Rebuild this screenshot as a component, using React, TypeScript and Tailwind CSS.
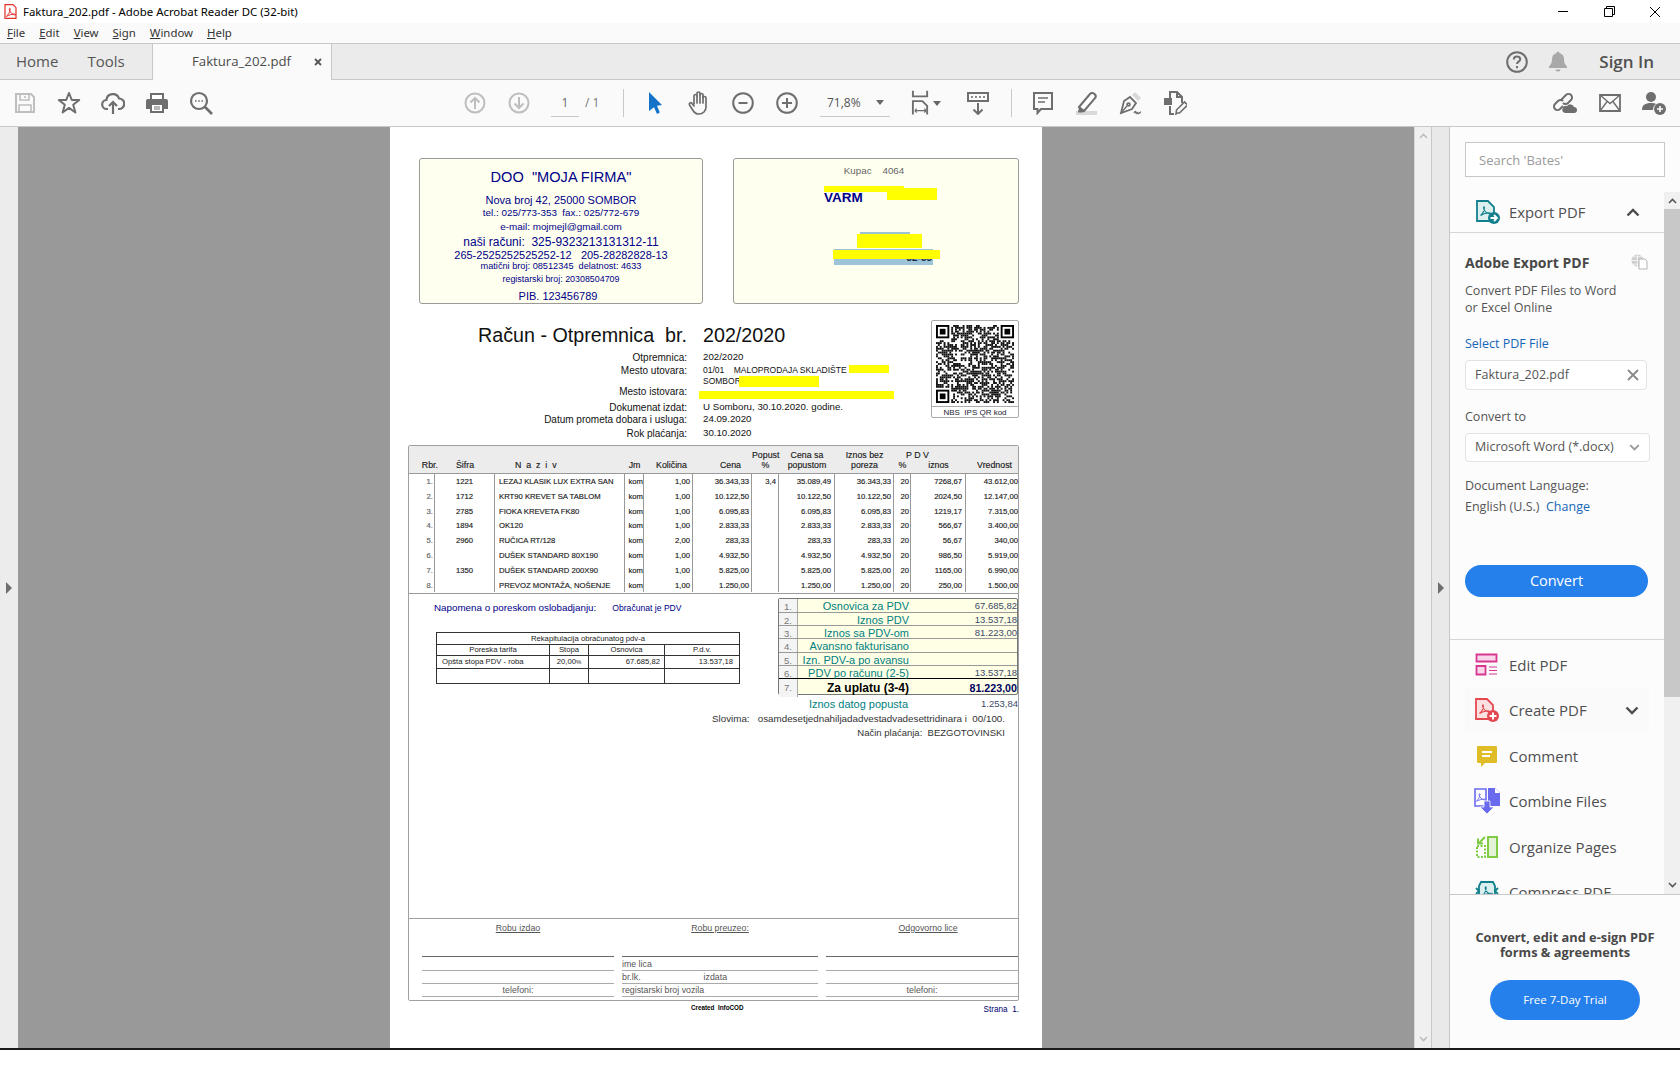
const rows = [
  ['1.', '1221', 'LEZAJ KLASIK LUX EXTRA SAN', 'kom', '1,00', '36.343,33', '3,4', '35.089,49', '36.343,33', '20', '7268,67', '43.612,00'],
  ['2.', '1712', 'KRT90 KREVET SA TABLOM', 'kom', '1,00', '10.122,50', '', '10.122,50', '10.122,50', '20', '2024,50', '12.147,00'],
  ['3.', '2785', 'FIOKA KREVETA FK80', 'kom', '1,00', '6.095,83', '', '6.095,83', '6.095,83', '20', '1219,17', '7.315,00'],
  ['4.', '1894', 'OK120', 'kom', '1,00', '2.833,33', '', '2.833,33', '2.833,33', '20', '566,67', '3.400,00'],
  ['5.', '2960', 'RUČICA RT/128', 'kom', '2,00', '283,33', '', '283,33', '283,33', '20', '56,67', '340,00'],
  ['6.', '', 'DUŠEK STANDARD 80X190', 'kom', '1,00', '4.932,50', '', '4.932,50', '4.932,50', '20', '986,50', '5.919,00'],
  ['7.', '1350', 'DUŠEK STANDARD 200X90', 'kom', '1,00', '5.825,00', '', '5.825,00', '5.825,00', '20', '1165,00', '6.990,00'],
  ['8.', '', 'PREVOZ MONTAŽA, NOŠENJE', 'kom', '1,00', '1.250,00', '', '1.250,00', '1.250,00', '20', '250,00', '1.500,00'],
]

const cellCls = [
  'text-right pr-[1px] text-[#777]',
  'text-center',
  'text-left pl-[4px]',
  'text-right',
  'text-right pr-[2px]',
  'text-right pr-[2px]',
  'text-right pr-[2px]',
  'text-right pr-[3px]',
  'text-right pr-[2px]',
  'text-right pr-[1px]',
  'text-right pr-[3px]',
  'text-right',
]

const totals = [
  ['1.', 'Osnovica za PDV', '67.685,82'],
  ['2.', 'Iznos PDV', '13.537,18'],
  ['3.', 'Iznos sa PDV-om', '81.223,00'],
  ['4.', 'Avansno fakturisano', ''],
  ['5.', 'Izn. PDV-a po avansu', ''],
  ['6.', 'PDV po računu (2-5)', '13.537,18'],
]

const infoRows = [
  ['Otpremnica:', '202/2020', 'mt-[1px]', 'text-[9.700px]'],
  ['Mesto utovara:', '01/01    MALOPRODAJA SKLADIŠTE', 'mt-[1px]', 'text-[8.500px]'],
  ['', 'SOMBOR', '-mt-[1px]', 'text-[8.500px]'],
  ['Mesto istovara:', '', '-mt-[2px]', 'text-[9.700px]'],
  ['Dokumenat izdat:', 'U Somboru, 30.10.2020. godine.', 'mt-[4px]', 'text-[9.700px]'],
  ['Datum prometa dobara i usluga:', '24.09.2020', 'mt-0', 'text-[9.700px]'],
  ['Rok plaćanja:', '30.10.2020', 'mt-[2px]', 'text-[9.700px]'],
]

// pseudo random modules for the qr picture
function qrCells() {
  const n = 41
  const cells: [number, number][] = []
  let s = 90173
  const finder = (x: number, y: number) => x < 8 && y < 8 || x >= n - 8 && y < 8 || x < 8 && y >= n - 8
  for (let y = 0; y < n; y++) {
    for (let x = 0; x < n; x++) {
      s = (s * 1103515245 + 12345) & 0x7fffffff
      if (!finder(x, y) && (s >> 16) % 100 < 52) cells.push([x, y])
    }
  }
  return cells
}

function Finder({ x, y }: { x: number; y: number }) {
  return (
    <g>
      <rect x={x + 0.5} y={y + 0.5} width={6} height={6} fill="none" stroke="#000" />
      <rect x={x + 2} y={y + 2} width={3} height={3} fill="#000" />
    </g>
  )
}

function Qr() {
  return (
    <svg viewBox="0 0 41 41" className="w-[78px] h-[80px]">
      {qrCells().map(([x, y]) => (
        <rect key={x + '-' + y} x={x} y={y} width={1} height={1} fill="#111" />
      ))}
      <Finder x={0} y={0} />
      <Finder x={34} y={0} />
      <Finder x={0} y={34} />
    </svg>
  )
}

function Swoosh({ color, x = 0, y = 0, s = 1 }: { color: string; x?: number; y?: number; s?: number }) {
  return (
    <path
      transform={`translate(${x} ${y}) scale(${s})`}
      d="M1 11c2-1.5 4-5 4.200-8 .1-1.500-1-1.500-1 0 0 3 3.800 6.300 6.500 6.500 1.200.1 1-1.200-.5-1.200-2.700 0-6.700 1.300-9.200 2.700z"
      fill="none"
      stroke={color}
      strokeWidth="1.100"
    />
  )
}

const gray = '#6e6e6e'
const off = '#bebebe'

function SaveIcon() {
  return (
    <svg width="20" height="20" viewBox="0 0 20 20" fill="none" stroke={off} strokeWidth="2">
      <path d="M1 1h15l3 3v15H1z" />
      <path d="M5 1v6h9V1M4 19v-7h12v7M10 3v2" strokeWidth="1.600" />
    </svg>
  )
}
function StarIcon() {
  return (
    <svg width="24" height="24" viewBox="0 0 24 24" fill="none" stroke={gray} strokeWidth="2" strokeLinejoin="round">
      <path d="M12 2l2.800 7h7.400l-6 4.700 2.200 7.800-6.400-4.600-6.400 4.600 2.200-7.800-6-4.700h7.400z" />
    </svg>
  )
}
function CloudIcon() {
  return (
    <svg width="24" height="24" viewBox="0 0 24 24" fill="none" stroke={gray} strokeWidth="2.200">
      <path d="M7 18H6a4.500 4.500 0 0 1-.6-9A6.500 6.500 0 0 1 18 7.500 5 5 0 0 1 18 18h-1" />
      <path d="M12 23V11M8 15l4-4 4 4" />
    </svg>
  )
}
function PrintIcon() {
  return (
    <svg width="24" height="24" viewBox="0 0 24 24">
      <path d="M5 8V2h14v6h2a2 2 0 0 1 2 2v8h-4v4H5v-4H1v-8a2 2 0 0 1 2-2z" fill={gray} />
      <path d="M7 4h10v4H7zM7 14h10v6H7z" fill="#fff" />
      <path d="M9 16h6M9 18h6" stroke={gray} />
    </svg>
  )
}
function FindIcon() {
  return (
    <svg width="24" height="24" viewBox="0 0 24 24" fill="none" stroke={gray} strokeWidth="2.200">
      <circle cx="10" cy="10" r="8" />
      <path d="M16 16l7 7" strokeWidth="2.600" />
      <path d="M6 10h1.600M9.200 10h1.600M12.400 10h1.600" strokeWidth="1.600" />
    </svg>
  )
}
function RoundArrow({ down }: { down?: boolean }) {
  return (
    <svg width="22" height="22" viewBox="0 0 22 22" fill="none" stroke={off} strokeWidth="2">
      <circle cx="11" cy="11" r="9.500" />
      {down ? <path d="M11 5v11M6.500 11.500L11 16l4.500-4.500" /> : <path d="M11 17V6M6.500 10.500L11 6l4.500 4.500" />}
    </svg>
  )
}
function CursorIcon() {
  return (
    <svg width="16" height="22" viewBox="0 0 16 22">
      <path d="M2 0l13 13-5 .8 2.800 6.700-2.800 1.500-3-6.800L2 19z" fill="#1473c9" />
    </svg>
  )
}
function HandIcon() {
  return (
    <svg width="24" height="26" viewBox="0 0 24 26" fill="none" stroke={gray} strokeWidth="1.700" strokeLinecap="round" strokeLinejoin="round">
      <path d="M7 14V6a1.500 1.500 0 0 1 3 0V3.500a1.500 1.500 0 0 1 3 0V5a1.500 1.500 0 0 1 3 0v3a1.500 1.500 0 0 1 3 0v9c0 4-3 7-7 7-3 0-4.500-1-6-3.500L2.500 15c-1-2 1.500-3 2.500-1.500L7 16" />
      <path d="M10 6v7M13 4v9M16 6v7" />
    </svg>
  )
}
function ZoomIcon({ plus }: { plus?: boolean }) {
  return (
    <svg width="22" height="22" viewBox="0 0 22 22" fill="none" stroke={gray} strokeWidth="2">
      <circle cx="11" cy="11" r="9.800" />
      <path d={plus ? 'M6 11h10M11 6v10' : 'M6.500 11h9'} />
    </svg>
  )
}
function FitIcon() {
  return (
    <svg width="20" height="26" viewBox="0 0 20 26" fill="none" stroke={gray} strokeWidth="2">
      <path d="M2 0v6h15V0" />
      <path d="M2 25V11h10l5 5v9" />
      <path d="M4 21h12M4 21l2-2M4 21l2 2M16 21l-2-2M16 21l-2 2" strokeWidth="1.200" />
    </svg>
  )
}
function RulerIcon() {
  return (
    <svg width="24" height="24" viewBox="0 0 24 24" fill="none" stroke={gray} strokeWidth="2">
      <path d="M2 2h20v8H2z" />
      <path d="M6 5v2M10 5v2M14 5v2M18 5v2" strokeWidth="1.600" />
      <path d="M12 12v11M7.500 18.500L12 23l4.500-4.500" />
    </svg>
  )
}
function CommentIcon() {
  return (
    <svg width="22" height="24" viewBox="0 0 22 24" fill="none" stroke={gray} strokeWidth="2">
      <path d="M2 2h18v16H9l-3.500 4v-4H2z" />
      <path d="M6 7h10M6 11h7" strokeWidth="1.500" />
    </svg>
  )
}
function MarkerIcon() {
  return (
    <svg width="24" height="24" viewBox="0 0 24 24">
      <path d="M1 20h21v4H1z" fill="#d9d9d9" />
      <path d="M4 16L15 3c1-1.300 3-1.300 4.500 0s1.500 3 .5 4.200L9 20z" fill="#fff" stroke={gray} strokeWidth="2" />
      <path d="M4 16l5 4-1.500 1.500H3z" fill={gray} />
    </svg>
  )
}
function PenIcon() {
  return (
    <svg width="24" height="24" viewBox="0 0 24 24" fill="none" stroke={gray} strokeWidth="1.800">
      <path d="M13 4l3-3 6 6-3 3z" fill="#d9d9d9" stroke="none" />
      <path d="M2 22l3-12 6-4 6 6-4 6z" />
      <path d="M2 22l6-7" strokeWidth="1.300" />
      <circle cx="9.500" cy="13.500" r="1.400" />
      <path d="M15 22c1-2 2-2 2 0s2-2 2 0 2-1 3-1" strokeWidth="1.300" />
    </svg>
  )
}
function EditDocIcon() {
  return (
    <svg width="24" height="24" viewBox="0 0 24 24" fill="none" stroke={gray} strokeWidth="2">
      <path d="M7 7V1h7l5 5v6M14 1v5h5" />
      <path d="M1 7h8v7H1z" fill={gray} stroke="none" />
      <path d="M7 15v8h4" />
      <path d="M14 22l-1 1 .5-4 8-8 3 3-8 8z" strokeWidth="1.600" />
    </svg>
  )
}
function LinkCloudIcon() {
  return (
    <svg width="26" height="24" viewBox="0 0 26 24" fill="none" stroke={gray} strokeWidth="2">
      <path d="M10 9l5-5a3.500 3.500 0 0 1 5 5l-3 3a3.500 3.500 0 0 1-5 0" />
      <path d="M12 15l-3 3a3.500 3.500 0 0 1-5-5l3-3a3.500 3.500 0 0 1 5 0" />
      <path d="M14 22h9a3 3 0 0 0 0-6 4 4 0 0 0-7-1 3.500 3.500 0 0 0-2 7z" fill={gray} stroke="none" />
    </svg>
  )
}
function MailIcon() {
  return (
    <svg width="22" height="18" viewBox="0 0 22 18" fill="none" stroke={gray} strokeWidth="1.800">
      <path d="M1 1h20v16H1z" />
      <path d="M1 1l10 8.500L21 1M1 17l7.500-10M21 17l-7.500-10" strokeWidth="1.400" />
    </svg>
  )
}
function AddUserIcon() {
  return (
    <svg width="25" height="24" viewBox="0 0 25 24">
      <circle cx="9" cy="6" r="5" fill={gray} />
      <path d="M0 19c0-5 3-7 9-7 2 0 4 .3 5 1a7 7 0 0 0-3 6z" fill={gray} />
      <circle cx="18" cy="18" r="6" fill={gray} />
      <path d="M18 15v6M15 18h6" stroke="#fff" strokeWidth="1.600" />
    </svg>
  )
}
function HelpIcon() {
  return (
    <svg width="22" height="22" viewBox="0 0 22 22" fill="none" stroke={gray} strokeWidth="2">
      <circle cx="11" cy="11" r="9.800" />
      <path d="M7.800 8.500c0-2 1.400-3 3.200-3s3.200 1 3.200 2.700c0 2.500-3.200 2.300-3.200 4.800" />
      <path d="M11 15v2.200" />
    </svg>
  )
}
function BellIcon() {
  return (
    <svg width="18" height="21" viewBox="0 0 18 21">
      <path d="M7.500 2a1.500 1.500 0 0 1 3 0c3 1 4.500 3 4.500 6 0 4 1 5.500 3 7.500v1.500H0v-1.500c2-2 3-3.500 3-7.500 0-3 1.500-5 4.500-6z" fill="#a8a8a8" />
      <path d="M6.500 18.500h5a2.500 2 0 0 1-5 0z" fill="#a8a8a8" />
    </svg>
  )
}
function DocBadge({ color, light, plus }: { color: string; light: string; plus?: boolean }) {
  return (
    <svg width="24" height="24" viewBox="0 0 24 24" fill="none">
      <path d="M1 1h11l6 6v14H1z" fill={light} stroke={color} strokeWidth="1.800" />
      <Swoosh color={color} x={3.500} y={5} s={0.95} />
      <circle cx="18" cy="18" r="6" fill={color} />
      {plus ? (
        <path d="M18 14.500v7M14.500 18h7" stroke="#fff" strokeWidth="2" />
      ) : (
        <path d="M14.500 18h6M18 15l3 3-3 3" stroke="#fff" strokeWidth="1.800" />
      )}
    </svg>
  )
}
function EditPdfIcon() {
  return (
    <svg width="24" height="24" viewBox="0 0 24 24" fill="none" stroke="#d83790" strokeWidth="1.800">
      <path d="M1.500 1.500h20v7h-20z" fill="#f7d7e9" />
      <path d="M1.500 13h9v8.500h-9z" fill="#f7d7e9" />
      <path d="M14 14h8M14 17.500h8M14 21h8" strokeWidth="1.200" />
    </svg>
  )
}
function CommentToolIcon() {
  return (
    <svg width="22" height="24" viewBox="0 0 22 24">
      <path d="M2 2h18a1 1 0 0 1 1 1v15a1 1 0 0 1-1 1H9l-4 4v-4H2a1 1 0 0 1-1-1V3a1 1 0 0 1 1-1z" fill="#e0bc28" />
      <path d="M6 8h10M6 12h8" stroke="#fff" strokeWidth="1.800" />
    </svg>
  )
}
function CombineIcon() {
  return (
    <svg width="26" height="26" viewBox="0 0 26 26">
      <path d="M1 1h11v17H1z" fill="#fff" stroke="#6a6aee" strokeWidth="1.600" />
      <Swoosh color="#6a6aee" x={1.500} y={4} s={0.85} />
      <path d="M14 0h7l5 5v13H14z" fill="#6a6aee" />
      <path d="M21 0l5 5h-5z" fill="#fff" />
      <path d="M10 13h6v6h4l-7 7-7-7h4z" fill="#6a6aee" stroke="#fff" strokeWidth=".8" />
    </svg>
  )
}
function OrganizeIcon() {
  return (
    <svg width="24" height="24" viewBox="0 0 24 24" fill="none" stroke="#7fcc44" strokeWidth="2">
      <path d="M13 2h9v20h-9z" fill="#e4f3d6" />
      <path d="M2 11h8v11H2z" strokeDasharray="2 1.500" />
      <path d="M10 2L4 8M3 3.500V8.500h5" strokeWidth="2" />
    </svg>
  )
}
function CompressIcon() {
  return (
    <svg width="24" height="24" viewBox="0 0 24 24" fill="none" stroke="#12808c" strokeWidth="1.800">
      <path d="M6 2h12l2 4v12l-2 4H6l-2-4V6z" fill="#dcefef" />
      <path d="M1 8l3 3-3 3M23 8l-3 3 3 3" />
      <Swoosh color="#12808c" x={6} y={5} s={1} />
    </svg>
  )
}
function GlobeDocIcon() {
  return (
    <svg width="17" height="16" viewBox="0 0 17 16">
      <circle cx="6.500" cy="6.500" r="6" fill="#cfcfcf" />
      <path d="M.500 6.500h12M6.500 .500v12M2 2.800h9M2 10.200h9" stroke="#fcfcfc" strokeWidth=".7" />
      <path d="M8 5h6l2 2v8H8z" fill="#fff" stroke="#b4b4b4" />
    </svg>
  )
}
function Chevron({ down, className }: { down?: boolean; className?: string }) {
  return (
    <svg width="14" height="9" viewBox="0 0 14 9" fill="none" stroke="currentColor" strokeWidth="2.400" className={className}>
      <path d={down ? 'M1.500 1.500L7 7l5.500-5.500' : 'M1.500 7.500L7 2l5.500 5.500'} />
    </svg>
  )
}

function ToolBtn({ children }: { children: React.ReactNode }) {
  return <div className="w-[44px] h-[46px] flex items-center justify-center shrink-0">{children}</div>
}

function Sep() {
  return <div className="w-px h-[28px] bg-[#c8c8c8] shrink-0" />
}

function ToolRow({ icon, label, arrow, band }: { icon: React.ReactNode; label: string; arrow?: boolean; band?: boolean }) {
  return (
    <div className={band ? 'h-[45.500px] flex items-center mx-[15px] pl-[7px] bg-[#fafafa]' : 'h-[45.500px] flex items-center mx-[15px] pl-[7px]'}>
      <div className="w-[30px] flex justify-center">{icon}</div>
      <span className="ml-[7px] text-[15px] text-[#4f4f4f]">{label}</span>
      {arrow && <Chevron down className="ml-auto mr-[10px] text-[#4b4b4b]" />}
    </div>
  )
}

export default function App() {
  return (
    <div className="w-[1680px] h-[1078px] overflow-hidden flex flex-col bg-white font-['Open_Sans',sans-serif] text-[#4b4b4b]">
      {/* title bar */}
      <div className="h-[23px] shrink-0 bg-white flex items-center pl-[4px] text-[11.400px] text-black font-['Noto_Sans',sans-serif]">
        <svg width="13" height="15" viewBox="0 0 13 15" fill="none" className="mr-[6px]">
          <path d="M1 .700h8l3 3v10.600H1z" fill="#fff" stroke="#e0312a" strokeWidth="1.200" />
          <Swoosh color="#e0312a" x={1.500} y={2.500} s={0.9} />
        </svg>
        <span>Faktura_202.pdf - Adobe Acrobat Reader DC (32-bit)</span>
        <div className="ml-auto flex items-center pr-[2px]">
          <div className="w-[46px] flex justify-center"><div className="w-[10px] h-px bg-black" /></div>
          <div className="w-[46px] flex justify-center">
            <svg width="11" height="11" viewBox="0 0 11 11" fill="none" stroke="#000">
              <path d="M.500 2.500h8v8h-8zM2.500 2.500v-2h8v8h-2" />
            </svg>
          </div>
          <div className="w-[46px] flex justify-center">
            <svg width="12" height="12" viewBox="0 0 12 12" stroke="#000"><path d="M1 1l10 10M11 1L1 11" /></svg>
          </div>
        </div>
      </div>

      {/* menu */}
      <div className="h-[20px] shrink-0 bg-[#fafafa] flex items-center pl-[7px] gap-[14px] text-[11.400px] text-[#333] font-['Noto_Sans',sans-serif]">
        <span><u>F</u>ile</span>
        <span><u>E</u>dit</span>
        <span><u>V</u>iew</span>
        <span><u>S</u>ign</span>
        <span><u>W</u>indow</span>
        <span><u>H</u>elp</span>
      </div>

      {/* tabs */}
      <div className="h-[37px] shrink-0 bg-[#ebebeb] border-t border-b border-[#c8c8c8] flex items-stretch text-[15px] text-[#565656]">
        <div className="w-[152px] flex items-center pl-[16px] gap-[29px]">
          <span>Home</span>
          <span>Tools</span>
        </div>
        <div className="w-[180px] -mb-px bg-[#fafafa] border-l border-r border-[#c8c8c8] flex items-center pl-[39px] text-[13.200px] text-[#4b4b4b]">
          <span>Faktura_202.pdf</span>
          <svg width="8" height="8" viewBox="0 0 8 8" stroke="#555" strokeWidth="1.800" className="ml-[23px]"><path d="M1 1l6 6M7 1L1 7" /></svg>
        </div>
        <div className="ml-auto flex items-center pr-[26px]">
          <HelpIcon />
          <div className="ml-[21px]"><BellIcon /></div>
          <span className="ml-[32px] text-[17px] font-semibold text-[#505050]">Sign In</span>
        </div>
      </div>

      {/* toolbar */}
      <div className="h-[47px] shrink-0 bg-[#fafafa] border-b border-[#c8c8c8] flex items-center pl-[3px] pr-[4px]">
        <ToolBtn><SaveIcon /></ToolBtn>
        <ToolBtn><StarIcon /></ToolBtn>
        <ToolBtn><CloudIcon /></ToolBtn>
        <ToolBtn><PrintIcon /></ToolBtn>
        <ToolBtn><FindIcon /></ToolBtn>
        <div className="w-[230px] shrink-0" />
        <ToolBtn><RoundArrow /></ToolBtn>
        <ToolBtn><RoundArrow down /></ToolBtn>
        <div className="ml-[10px] w-[28px] h-[28px] border-b border-[#c8c8c8] flex items-center justify-center text-[12px] text-[#666] shrink-0">1</div>
        <span className="ml-[6px] w-[38px] text-[12px] text-[#777] shrink-0">/ 1</span>
        <Sep />
        <div className="w-[9px] shrink-0" />
        <ToolBtn><CursorIcon /></ToolBtn>
        <ToolBtn><HandIcon /></ToolBtn>
        <ToolBtn><ZoomIcon /></ToolBtn>
        <ToolBtn><ZoomIcon plus /></ToolBtn>
        <div className="ml-[11px] w-[70px] h-[28px] border-b border-[#c8c8c8] flex items-center pl-[7px] text-[12px] text-[#555] shrink-0">
          71,8%
          <div className="ml-[15px] w-0 h-0 border-l-[4px] border-r-[4px] border-t-[5px] border-l-transparent border-r-transparent border-t-[#666]" />
        </div>
        <div className="ml-[21px] w-[30px] flex items-center shrink-0">
          <FitIcon />
          <div className="ml-[3px] w-0 h-0 border-l-[4px] border-r-[4px] border-t-[5px] border-l-transparent border-r-transparent border-t-[#666]" />
        </div>
        <div className="ml-[15px]"><ToolBtn><RulerIcon /></ToolBtn></div>
        <div className="ml-[11px]"><Sep /></div>
        <div className="w-[9px] shrink-0" />
        <ToolBtn><CommentIcon /></ToolBtn>
        <ToolBtn><MarkerIcon /></ToolBtn>
        <ToolBtn><PenIcon /></ToolBtn>
        <ToolBtn><EditDocIcon /></ToolBtn>
        <div className="ml-auto flex">
          <ToolBtn><LinkCloudIcon /></ToolBtn>
          <div className="w-[2px]" />
          <ToolBtn><MailIcon /></ToolBtn>
          <ToolBtn><AddUserIcon /></ToolBtn>
        </div>
      </div>

      {/* main */}
      <div className="flex-1 min-h-0 flex">
        <div className="w-[18px] shrink-0 bg-[#ececec] flex items-center justify-center pt-[1px]">
          <div className="w-0 h-0 border-t-[6px] border-b-[6px] border-l-[6px] border-t-transparent border-b-transparent border-l-[#6e6e6e]" />
        </div>

        <div className="flex-1 min-w-0 bg-[#999999] flex justify-center overflow-hidden">
          {/* pdf page */}
          <div className="w-[652px] h-full bg-white pl-[18px] pr-[23px] pt-[31px] overflow-hidden font-['Liberation_Sans',sans-serif] text-[#111]">
            <div className="flex gap-[30px] ml-[11px]">
              <div className="w-[284px] h-[146px] bg-[#ffffef] border border-[#9a9a9a] rounded-[3px] flex flex-col items-center text-[#000088] whitespace-pre">
                <div className="h-[27px] mt-[5px] flex items-center text-[14.600px]">DOO  "MOJA FIRMA"</div>
                <div className="h-[14px] mt-[2px] flex items-center text-[11px]">Nova broj 42, 25000 SOMBOR</div>
                <div className="h-[13px] flex items-center text-[9.900px]">tel.: 025/773-353  fax.: 025/772-679</div>
                <div className="h-[15px] flex items-center text-[9.900px]">e-mail: mojmejl@gmail.com</div>
                <div className="h-[13px] flex items-center text-[12px]">naši računi:  325-9323213131312-11</div>
                <div className="h-[14px] flex items-center text-[11px]">265-2525252525252-12   205-28282828-13</div>
                <div className="h-[10px] flex items-center text-[9.200px]">matični broj: 08512345  delatnost: 4633</div>
                <div className="h-[14px] mt-[1px] flex items-center text-[8.900px]">registarski broj: 20308504709</div>
                <div className="h-[14px] mt-[2px] flex items-center text-[11px] pr-[6px]">PIB. 123456789</div>
              </div>
              <div className="relative w-[286px] h-[146px] bg-[#ffffef] border border-[#9a9a9a] rounded-[3px] overflow-hidden">
                <div className="mt-[5px] text-center text-[9.800px] text-[#666] whitespace-pre pr-[4px]">Kupac    4064</div>
                <div className="mt-[9px] ml-[90px] text-[13.500px] font-bold text-[#000088]">VARM</div>
                <div className="absolute left-[90px] top-[27px] w-[80px] h-[6px] bg-[#ffff00]" />
                <div className="absolute left-[153px] top-[29px] w-[50px] h-[12px] bg-[#ffff00]" />
                <div className="absolute left-[126px] top-[73px] w-[50px] h-[5px] bg-[#9dc3d8]" />
                <div className="absolute left-[123px] top-[75px] w-[65px] h-[14px] bg-[#ffff00]" />
                <div className="absolute left-[100px] top-[90px] w-[99px] h-[16px] bg-[#9dc3d8] flex items-end justify-end pr-[1px] text-[10px] leading-[14px] font-bold text-[#1c2a44]">32-35</div>
                <div className="absolute left-[99px] top-[91px] w-[107px] h-[9px] bg-[#ffff00]" />
              </div>
            </div>

            <div className="mt-[16px] h-[125px] flex">
              <div className="relative flex-1">
                <div className="h-[30px] pt-[2px] flex items-center text-[19.700px] whitespace-pre">
                  <span className="w-[279px] text-right">Račun - Otpremnica  br.</span>
                  <span className="ml-[16px]">202/2020</span>
                </div>
                {infoRows.map((r, i) => (
                  <div key={i} className={'h-[12px] flex items-center whitespace-pre ' + r[2]}>
                    <span className="w-[279px] text-right text-[10px]">{r[0]}</span>
                    <span className={'ml-[16px] ' + r[3]}>{r[1]}</span>
                  </div>
                ))}
                <div className="absolute left-[441px] top-[45px] w-[40px] h-[8px] bg-[#ffff00]" />
                <div className="absolute left-[331px] top-[56px] w-[80px] h-[11px] bg-[#ffff00]" />
                <div className="absolute left-[291px] top-[71px] w-[195px] h-[8px] bg-[#ffff00]" />
              </div>
              <div className="w-[88px] h-[98px] shrink-0 border border-[#aaa] rounded-[2px] flex flex-col items-center">
                <div className="mt-[3px]"><Qr /></div>
                <div className="mt-[2px] w-full border-t border-[#aaa] text-center text-[8px] text-[#223] whitespace-pre">NBS  IPS QR kod</div>
              </div>
            </div>

            {/* invoice frame */}
            <div className="w-[611px] h-[556px] border border-[#a0a0a0] rounded-[2px] flex flex-col">
              <div className="h-[28px] shrink-0 bg-[#ececec] border-b border-[#999] grid grid-cols-[26px_60px_130px_19px_49px_59px_27px_56px_59px_17px_55px_52px] text-[8.800px] leading-[10px] text-[#111] [-webkit-text-stroke:0.15px_#333]">
                <div className="self-end pb-[3px] -mr-[3px] text-right whitespace-nowrap">Rbr.</div>
                <div className="self-end pb-[3px] text-center">Šifra</div>
                <div className="self-end pb-[3px] pl-[20px] whitespace-pre">N  a  z  i  v</div>
                <div className="self-end pb-[3px] text-center">Jm</div>
                <div className="self-end pb-[3px] pl-[6px] text-center whitespace-nowrap">Količina</div>
                <div className="self-end pb-[3px] text-right pr-[11px]">Cena</div>
                <div className="self-end pb-[3px] text-center">Popust<br />%</div>
                <div className="self-end pb-[3px] text-center whitespace-nowrap">Cena sa<br />popustom</div>
                <div className="self-end pb-[3px] text-center whitespace-nowrap">Iznos bez<br />poreza</div>
                <div className="self-end pb-[3px] text-center whitespace-pre"><div className="pl-[12px] text-left">P D V</div>%</div>
                <div className="self-end pb-[3px] text-center">iznos</div>
                <div className="self-end pb-[3px] text-right pr-[6px]">Vrednost</div>
              </div>
              {rows.map((r) => (
                <div key={r[0]} className="h-[14.800px] shrink-0 grid grid-cols-[26px_60px_130px_19px_49px_59px_27px_56px_59px_17px_55px_52px] text-[7.700px] leading-[15px] text-[#111] [-webkit-text-stroke:0.15px_#333] [&>div]:border-r [&>div]:border-[#999] [&>div:last-child]:border-r-0 whitespace-nowrap overflow-hidden">
                  {r.map((c, i) => (
                    <div key={i} className={cellCls[i]}>{c}</div>
                  ))}
                </div>
              ))}

              <div className="flex-1 min-h-0 flex mt-[1px] border-t border-[#999]">
                <div className="w-[369px] shrink-0 pt-[7px]">
                  <div className="h-[14px] flex items-center text-[9.800px] text-[#000088] whitespace-nowrap">
                    <span className="ml-[25px]">Napomena o poreskom oslobadjanju:</span>
                    <span className="ml-[16px] text-[8.600px]">Obračunat je PDV</span>
                  </div>
                  <div className="mt-[17px] ml-[27px] w-[304px] border border-[#333] text-[7.700px] text-[#222]">
                    <div className="h-[12px] border-b border-[#333] flex items-center justify-center">Rekapitulacija obračunatog pdv-a</div>
                    <div className="h-[11px] border-b border-[#333] grid grid-cols-[113px_39px_76px_1fr] [&>div]:border-r [&>div]:border-[#333] [&>div:last-child]:border-r-0 text-center leading-[10px]">
                      <div>Poreska tarifa</div>
                      <div>Stopa</div>
                      <div>Osnovica</div>
                      <div>P.d.v.</div>
                    </div>
                    <div className="h-[13px] border-b border-[#333] grid grid-cols-[113px_39px_76px_1fr] [&>div]:border-r [&>div]:border-[#333] [&>div:last-child]:border-r-0 leading-[12px]">
                      <div className="pl-[5px]">Opšta stopa PDV - roba</div>
                      <div className="text-center">20,00<span className="text-[6px]">%</span></div>
                      <div className="text-right pr-[4px]">67.685,82</div>
                      <div className="text-right pr-[6px]">13.537,18</div>
                    </div>
                    <div className="h-[14px] grid grid-cols-[113px_39px_76px_1fr] [&>div]:border-r [&>div]:border-[#333] [&>div:last-child]:border-r-0">
                      <div />
                      <div />
                      <div />
                      <div />
                    </div>
                  </div>
                </div>

                <div className="flex-1 min-w-0 pt-[4px]">
                  <div className="h-[97px] border border-[#777] rounded-[2px] bg-[#ffffe6] flex flex-col">
                    {totals.map((t, i) => (
                      <div key={t[0]} className={i === 5 ? 'h-[13.300px] border-b border-black flex text-[11px] leading-[15px]' : 'h-[13.300px] border-b border-[#999] flex text-[11px] leading-[15px]'}>
                        <div className="w-[19px] bg-[#f4f4f4] border-r border-[#aaa] text-center text-[9.500px] text-[#777]">{t[0]}</div>
                        <div className="w-[111px] text-right text-[#008080] whitespace-nowrap">{t[1]}</div>
                        <div className="flex-1 text-right text-[#3b4a68] text-[9.500px] leading-[13px]">{t[2]}</div>
                      </div>
                    ))}
                    <div className="flex-1 flex items-center">
                      <div className="w-[19px] h-full bg-[#f4f4f4] border-r border-[#aaa] text-center text-[9.500px] text-[#777] leading-[17px]">7.</div>
                      <div className="w-[111px] text-right text-[12px] font-bold text-black whitespace-nowrap">Za uplatu (3-4)</div>
                      <div className="flex-1 text-right text-[10.700px] font-bold text-[#000060]">81.223,00</div>
                    </div>
                  </div>
                  <div className="h-[14px] mt-[2px] flex items-center text-[11px]">
                    <span className="w-[130px] text-right text-[#008080] whitespace-nowrap">Iznos datog popusta</span>
                    <span className="flex-1 text-right text-[#3b4a68] text-[9.500px]">1.253,84</span>
                  </div>
                  <div className="h-[14px] mt-[1px] flex justify-end items-center pr-[13px] text-[9.800px] text-[#333] whitespace-pre">Slovima:   osamdesetjednahiljadadvestadvadesettridinara i  00/100.</div>
                  <div className="h-[14px] flex justify-end items-center pr-[13px] text-[9.500px] text-[#333] whitespace-pre">Način plaćanja:  BEZGOTOVINSKI</div>
                </div>
              </div>

              {/* signatures */}
              <div className="h-[82px] shrink-0 border-t border-[#a0a0a0] pl-[13px] grid grid-cols-[192px_196px_1fr] gap-[8px] text-[8.800px] text-[#555]">
                {[
                  { t: 'Robu izdao', a: '', b: '', c: 'telefoni:' },
                  { t: 'Robu preuzeo:', a: 'ime lica', b: 'br.lk.', c: 'registarski broj vozila' },
                  { t: 'Odgovorno lice', a: '', b: '', c: 'telefoni:' },
                ].map((s, i) => (
                  <div key={s.t} className="flex flex-col">
                    <div className={i === 2 ? 'h-[38px] pt-[3px] pl-[12px] border-b border-[#666] text-center' : 'h-[38px] pt-[3px] border-b border-[#666] text-center'}><u>{s.t}</u></div>
                    <div className={i === 1 ? 'h-[14px] border-b border-[#aaa] leading-[14px]' : 'h-[14px] border-b border-[#aaa]'}>{s.a}</div>
                    <div className="h-[13px] border-b border-[#aaa] leading-[13px] flex">
                      {s.b}
                      {i === 1 && <span className="ml-[63px]">izdata</span>}
                    </div>
                    <div className={i === 1 ? 'h-[13px] border-b border-[#aaa] leading-[13px]' : 'h-[13px] border-b border-[#aaa] leading-[13px] text-center'}>{s.c}</div>
                  </div>
                ))}
              </div>
            </div>

            <div className="flex pt-[2px] text-black">
              <span className="ml-[283px] text-[6.300px] font-bold whitespace-pre">Created  InfoCOD</span>
              <span className="ml-auto mt-[1px] text-[8.200px] text-[#000070] whitespace-pre">Strana  1.</span>
            </div>
          </div>
        </div>

        {/* viewer scrollbar */}
        <div className="w-[17px] shrink-0 bg-[#f0f0f0] border-l border-[#d8d8d8] flex flex-col items-center justify-between py-[6px] text-[#bdbdbd]">
          <Chevron className="w-[9px] h-[6px]" />
          <Chevron down className="w-[9px] h-[6px]" />
        </div>
        <div className="w-[19px] shrink-0 bg-[#e9e9e9] border-l border-r border-[#c8c8c8] flex items-center justify-center pt-[1px]">
          <div className="w-0 h-0 border-t-[6px] border-b-[6px] border-l-[6px] border-t-transparent border-b-transparent border-l-[#6e6e6e]" />
        </div>

        {/* right pane */}
        <div className="w-[230px] shrink-0 bg-[#fcfcfc] flex flex-col">
          <div className="h-[65px] shrink-0 pt-[15px] pl-[15px] pr-[15px]">
            <div className="h-[35px] border border-[#c8c8c8] bg-white flex items-center pl-[13px] pt-[2px] text-[13px] text-[#9a9a9a]">Search 'Bates'</div>
          </div>

          <div className="h-[703px] shrink-0 flex border-b border-[#c8c8c8]">
            <div className="w-[214px] overflow-hidden">
              <div className="h-[41px] border-b border-[#d6d6d6] flex items-center">
                <div className="w-[30px] ml-[23px] flex justify-center"><DocBadge color="#12808c" light="#dcefef" /></div>
                <span className="ml-[6px] text-[14.800px] text-[#4f4f4f]">Export PDF</span>
                <Chevron className="ml-auto mr-[24px] text-[#4b4b4b]" />
              </div>
              <div className="h-[407px] border-b border-[#d6d6d6] pt-[20px] pl-[15px] pr-[16px] text-[12.500px] text-[#555]">
                <div className="h-[18px] flex items-center justify-between text-[14px] font-bold text-[#484848]">
                  Adobe Export PDF
                  <GlobeDocIcon />
                </div>
                <div className="mt-[11px] leading-[17px]">Convert PDF Files to Word<br />or Excel Online</div>
                <div className="mt-[19px] leading-[17px] text-[#1666b8]">Select PDF File</div>
                <div className="mt-[8px] h-[30px] w-[182px] bg-white border border-[#e2e2e2] rounded-[4px] flex items-center pl-[9px] pr-[7px]">
                  <span>Faktura_202.pdf</span>
                  <svg width="12" height="12" viewBox="0 0 12 12" stroke="#888" strokeWidth="1.800" className="ml-auto"><path d="M1 1l10 10M11 1L1 11" /></svg>
                </div>
                <div className="mt-[18px] leading-[17px]">Convert to</div>
                <div className="mt-[8px] h-[29px] w-[185px] bg-white border border-[#e2e2e2] rounded-[4px] flex items-center pl-[9px] pr-[9px]">
                  <span>Microsoft Word (*.docx)</span>
                  <Chevron down className="ml-auto w-[11px] h-[7px] text-[#999]" />
                </div>
                <div className="mt-[15px] leading-[17px]">Document Language:</div>
                <div className="mt-[4px] leading-[17px]">English (U.S.)&nbsp; <span className="text-[#1666b8]">Change</span></div>
                <div className="mt-[50px] h-[32px] w-[183px] rounded-full bg-[#2680eb] flex items-center justify-center text-[14.500px] text-white">Convert</div>
              </div>
              <div className="pt-[2px]">
                <ToolRow icon={<EditPdfIcon />} label="Edit PDF" />
                <ToolRow icon={<DocBadge color="#e34850" light="#fbe0e2" plus />} label="Create PDF" arrow band />
                <ToolRow icon={<CommentToolIcon />} label="Comment" />
                <ToolRow icon={<CombineIcon />} label="Combine Files" />
                <ToolRow icon={<OrganizeIcon />} label="Organize Pages" />
                <ToolRow icon={<CompressIcon />} label="Compress PDF" />
              </div>
            </div>
            <div className="w-[16px] shrink-0 bg-[#f0f0f0] flex flex-col">
              <div className="h-[17px] flex items-center justify-center text-[#555]"><Chevron className="w-[9px] h-[6px]" /></div>
              <div className="h-[488px] bg-[#c8c8c8]" />
              <div className="flex-1 flex items-end justify-center pb-[6px] text-[#555]"><Chevron down className="w-[9px] h-[6px]" /></div>
            </div>
          </div>

          <div className="flex-1 flex flex-col items-center">
            <div className="mt-[35px] text-center text-[12.800px] leading-[15px] font-bold text-[#484848]">Convert, edit and e-sign PDF<br />forms &amp; agreements</div>
            <div className="mt-[20px] h-[40px] w-[150px] rounded-full bg-[#2680eb] flex items-center justify-center text-[11.500px] text-white">Free 7-Day Trial</div>
          </div>
        </div>
      </div>

      {/* below the window */}
      <div className="h-[2px] shrink-0 bg-[#1a1a1a]" />
      <div className="h-[28px] shrink-0 bg-white" />
    </div>
  )
}
